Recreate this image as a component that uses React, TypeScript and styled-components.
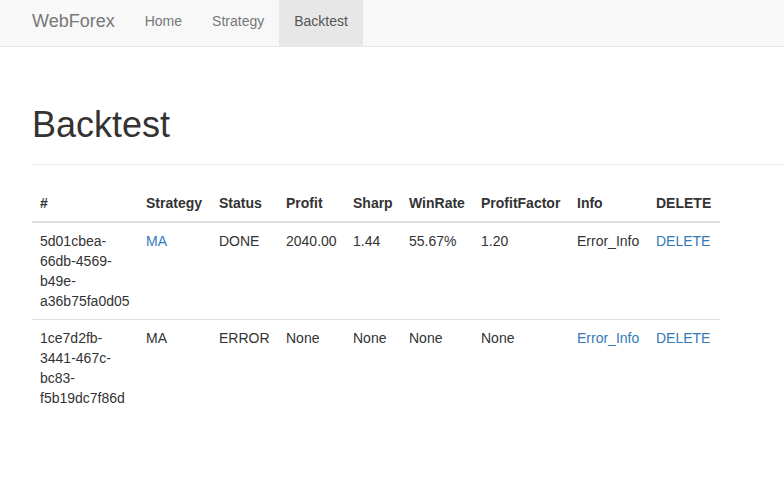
import * as React from "react";
import styled, { createGlobalStyle } from "styled-components";

const GlobalStyle = createGlobalStyle`
  html, body {
    margin: 0;
    padding: 0;
    background: #fff;
  }
  body {
    color: #333;
    font-family: "Liberation Sans", Arial, Helvetica, sans-serif;
    font-size: 14px;
    line-height: 20px;
    overflow: hidden;
  }
`;

const Navbar = styled.nav`
  background-color: #f8f8f8;
  border-bottom: 1px solid #e7e7e7;
  height: 46px;
`;

const NavContainer = styled.div`
  display: flex;
  align-items: stretch;
  height: 100%;
  margin: 0 17px;
`;

const Brand = styled.a`
  color: #777;
  font-size: 18px;
  line-height: 20px;
  padding: 11px 15px 15px;
  text-decoration: none;
`;

const NavLinks = styled.ul`
  display: flex;
  list-style: none;
  margin: 0;
  padding: 0;
`;

const NavLink = styled.a<{ $active?: boolean }>`
  display: block;
  padding: 11px 15px 15px;
  line-height: 20px;
  color: ${(p) => (p.$active ? "#555" : "#777")};
  background-color: ${(p) => (p.$active ? "#e7e7e7" : "transparent")};
  text-decoration: none;
`;

const Main = styled.main`
  padding-left: 32px;
`;

const PageHeader = styled.div`
  margin: 58px 0 20px;
  padding-bottom: 19px;
  border-bottom: 1px solid #eee;
`;

const Title = styled.h1`
  margin: 0;
  font-size: 36px;
  font-weight: 500;
  line-height: 40px;
  color: #333;
`;

const Table = styled.table`
  border-collapse: collapse;
  border-spacing: 0;
  table-layout: fixed;
  width: 688px;
`;

const Th = styled.th`
  text-align: left;
  vertical-align: bottom;
  padding: 8px;
  line-height: 20px;
  font-weight: bold;
  border-bottom: 2px solid #ddd;
`;

const Td = styled.td`
  vertical-align: top;
  padding: 8px;
  line-height: 20px;
  border-top: 1px solid #ddd;
  word-wrap: break-word;
`;

const Link = styled.a`
  color: #337ab7;
  text-decoration: none;
`;

type Run = {
  id: string[];
  strategy: string;
  strategyLink: boolean;
  status: string;
  profit: string;
  sharp: string;
  winRate: string;
  profitFactor: string;
  infoLink: boolean;
};

const runs: Run[] = [
  {
    id: ["5d01cbea-", "66db-4569-", "b49e-", "a36b75fa0d05"],
    strategy: "MA",
    strategyLink: true,
    status: "DONE",
    profit: "2040.00",
    sharp: "1.44",
    winRate: "55.67%",
    profitFactor: "1.20",
    infoLink: false,
  },
  {
    id: ["1ce7d2fb-", "3441-467c-", "bc83-", "f5b19dc7f86d"],
    strategy: "MA",
    strategyLink: false,
    status: "ERROR",
    profit: "None",
    sharp: "None",
    winRate: "None",
    profitFactor: "None",
    infoLink: true,
  },
];

const columns = [
  { label: "#", width: 106 },
  { label: "Strategy", width: 73 },
  { label: "Status", width: 67 },
  { label: "Profit", width: 67 },
  { label: "Sharp", width: 56 },
  { label: "WinRate", width: 72 },
  { label: "ProfitFactor", width: 96 },
  { label: "Info", width: 79 },
  { label: "DELETE", width: 72 },
];

export default function App() {
  return (
    <>
      <GlobalStyle />
      <Navbar>
        <NavContainer>
          <Brand href="#">WebForex</Brand>
          <NavLinks>
            <li>
              <NavLink href="#">Home</NavLink>
            </li>
            <li>
              <NavLink href="#">Strategy</NavLink>
            </li>
            <li>
              <NavLink href="#" $active>
                Backtest
              </NavLink>
            </li>
          </NavLinks>
        </NavContainer>
      </Navbar>
      <Main>
        <PageHeader>
          <Title>Backtest</Title>
        </PageHeader>
        <Table>
          <colgroup>
            {columns.map((c) => (
              <col key={c.label} style={{ width: c.width }} />
            ))}
          </colgroup>
          <thead>
            <tr>
              {columns.map((c) => (
                <Th key={c.label}>{c.label}</Th>
              ))}
            </tr>
          </thead>
          <tbody>
            {runs.map((r) => (
              <tr key={r.id.join("")}>
                <Td>
                  {r.id.map((part) => (
                    <div key={part}>{part}</div>
                  ))}
                </Td>
                <Td>{r.strategyLink ? <Link href="#">{r.strategy}</Link> : r.strategy}</Td>
                <Td>{r.status}</Td>
                <Td>{r.profit}</Td>
                <Td>{r.sharp}</Td>
                <Td>{r.winRate}</Td>
                <Td>{r.profitFactor}</Td>
                <Td>{r.infoLink ? <Link href="#">Error_Info</Link> : "Error_Info"}</Td>
                <Td>
                  <Link href="#">DELETE</Link>
                </Td>
              </tr>
            ))}
          </tbody>
        </Table>
      </Main>
    </>
  );
}
